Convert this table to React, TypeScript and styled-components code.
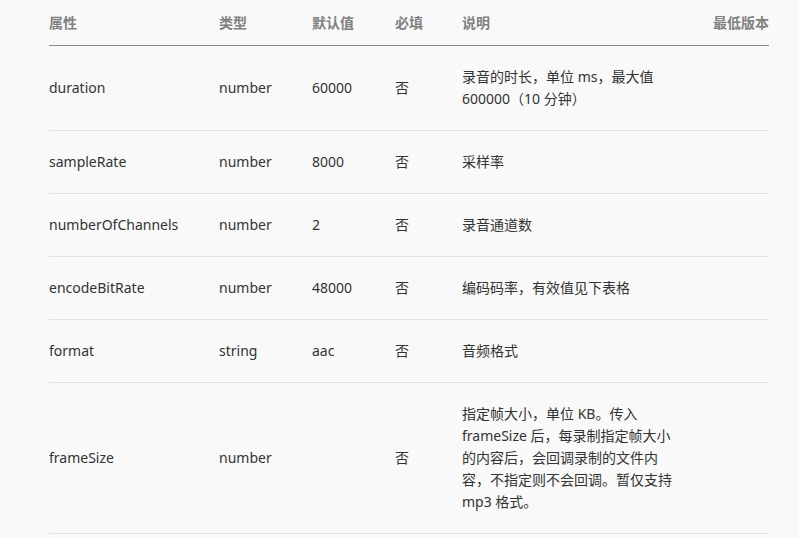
import React from "react";
import styled, { createGlobalStyle } from "styled-components";

const Global = createGlobalStyle`
  html, body { margin: 0; padding: 0; background: #f9f9f9; }
  body { font-family: "Noto Sans", "Noto Sans CJK SC", sans-serif; }
`;

const Page = styled.div`
  padding: 0 30px 0 49px;
  background: #f9f9f9;
  min-height: 538px;
  box-sizing: border-box;
`;

const Table = styled.table`
  width: 720px;
  border-collapse: collapse;
  table-layout: fixed;
  font-size: 14px;
  line-height: 22px;
  color: #333;
`;

const Th = styled.th<{ $right?: boolean }>`
  text-align: ${(p) => (p.$right ? "right" : "left")};
  font-weight: 700;
  color: #808080;
  padding: 12px 0 12px;
  line-height: 21px;
  border-bottom: 1px solid #8a8a8a;
`;

const Tr = styled.tr`
  border-bottom: 1px solid #e3e3e3;
`;

const Td = styled.td`
  padding: 20px 0;
  vertical-align: middle;
  word-break: break-word;
`;

const Desc = styled.div`
  width: 218px;
`;

type Row = { name: string; type: string; def: string; req: string; desc: string };

const rows: Row[] = [
  { name: "duration", type: "number", def: "60000", req: "否", desc: "录音的时长，单位 ms，最大值 600000（10 分钟）" },
  { name: "sampleRate", type: "number", def: "8000", req: "否", desc: "采样率" },
  { name: "numberOfChannels", type: "number", def: "2", req: "否", desc: "录音通道数" },
  { name: "encodeBitRate", type: "number", def: "48000", req: "否", desc: "编码码率，有效值见下表格" },
  { name: "format", type: "string", def: "aac", req: "否", desc: "音频格式" },
  {
    name: "frameSize",
    type: "number",
    def: "",
    req: "否",
    desc: "指定帧大小，单位 KB。传入 frameSize 后，每录制指定帧大小的内容后，会回调录制的文件内容，不指定则不会回调。暂仅支持 mp3 格式。",
  },
];

export default function App() {
  return (
    <>
      <Global />
      <Page>
        <Table>
          <colgroup>
            <col style={{ width: 170 }} />
            <col style={{ width: 93 }} />
            <col style={{ width: 83 }} />
            <col style={{ width: 67 }} />
            <col style={{ width: 228 }} />
            <col />
          </colgroup>
          <thead>
            <tr>
              <Th>属性</Th>
              <Th>类型</Th>
              <Th>默认值</Th>
              <Th>必填</Th>
              <Th>说明</Th>
              <Th $right>最低版本</Th>
            </tr>
          </thead>
          <tbody>
            {rows.map((r) => (
              <Tr key={r.name}>
                <Td>{r.name}</Td>
                <Td>{r.type}</Td>
                <Td>{r.def}</Td>
                <Td>{r.req}</Td>
                <Td>
                  <Desc>{r.desc}</Desc>
                </Td>
                <Td />
              </Tr>
            ))}
          </tbody>
        </Table>
      </Page>
    </>
  );
}
